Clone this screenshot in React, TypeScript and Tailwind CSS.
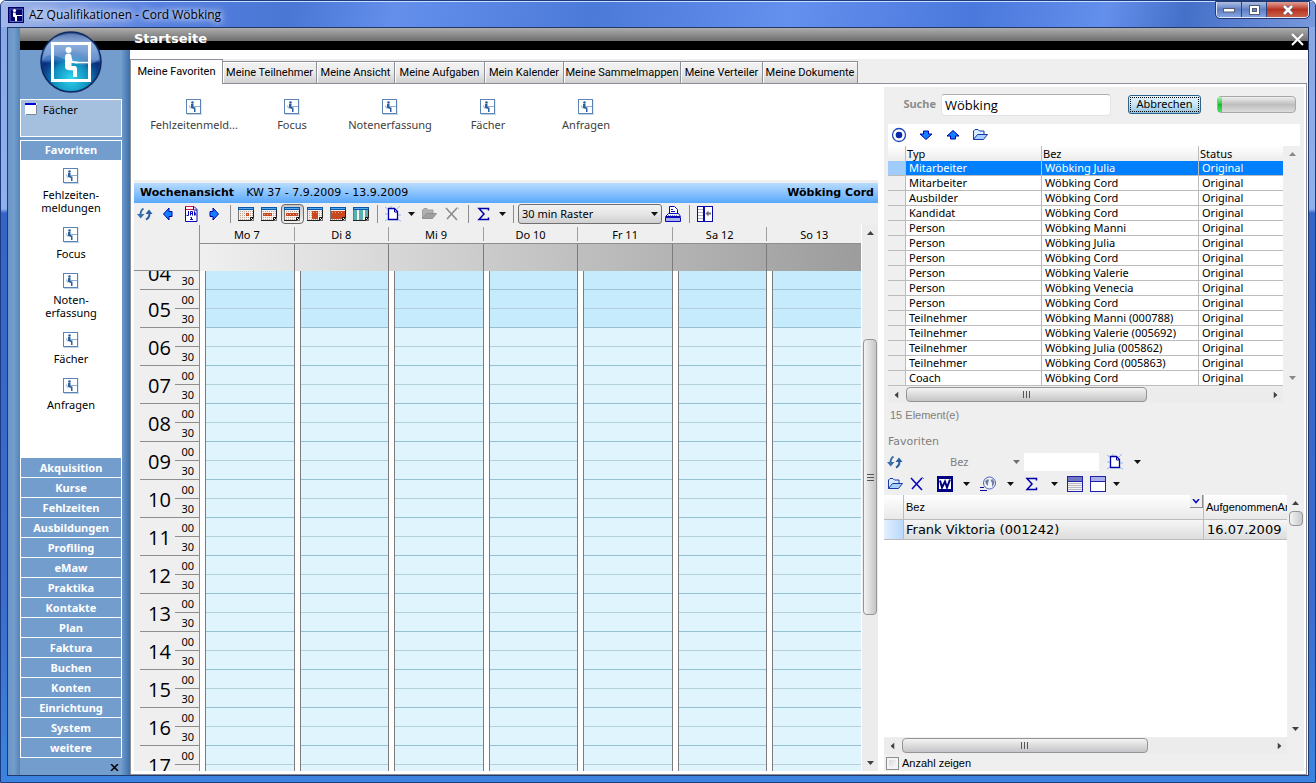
import React from 'react';
import clsx from 'clsx';

const tabs = [
  { label: 'Meine Favoriten', width: 'w-[93px]' },
  { label: 'Meine Teilnehmer', width: 'w-[94px]' },
  { label: 'Meine Ansicht', width: 'w-[78px]' },
  { label: 'Meine Aufgaben', width: 'w-[90px]' },
  { label: 'Mein Kalender', width: 'w-[79px]' },
  { label: 'Meine Sammelmappen', width: 'w-[117px]' },
  { label: 'Meine Verteiler', width: 'w-[82px]' },
  { label: 'Meine Dokumente', width: 'w-[95px]' },
];

const shortcuts = ['Fehlzeitenmeld...', 'Focus', 'Notenerfassung', 'Fächer', 'Anfragen'];

const sideShortcuts = [['Fehlzeiten-', 'meldungen'], ['Focus'], ['Noten-', 'erfassung'], ['Fächer'], ['Anfragen']];

const sections = [
  'Akquisition',
  'Kurse',
  'Fehlzeiten',
  'Ausbildungen',
  'Profiling',
  'eMaw',
  'Praktika',
  'Kontakte',
  'Plan',
  'Faktura',
  'Buchen',
  'Konten',
  'Einrichtung',
  'System',
  'weitere',
];

const days = ['Mo 7', 'Di 8', 'Mi 9', 'Do 10', 'Fr 11', 'Sa 12', 'So 13'];

const hours = ['05', '06', '07', '08', '09', '10', '11', '12', '13', '14', '15', '16'];

const results = [
  ['Mitarbeiter', 'Wöbking Julia'],
  ['Mitarbeiter', 'Wöbking Cord'],
  ['Ausbilder', 'Wöbking Cord'],
  ['Kandidat', 'Wöbking Cord'],
  ['Person', 'Wöbking Manni'],
  ['Person', 'Wöbking Julia'],
  ['Person', 'Wöbking Cord'],
  ['Person', 'Wöbking Valerie'],
  ['Person', 'Wöbking Venecia'],
  ['Person', 'Wöbking Cord'],
  ['Teilnehmer', 'Wöbking Manni (000788)'],
  ['Teilnehmer', 'Wöbking Valerie (005692)'],
  ['Teilnehmer', 'Wöbking Julia (005862)'],
  ['Teilnehmer', 'Wöbking Cord (005863)'],
  ['Coach', 'Wöbking Cord'],
];

/* ---------- icons ---------- */

const Svg = ({ w = 16, h = 16, children }: { w?: number; h?: number; children: React.ReactNode }) => (
  <svg width={w} height={h} viewBox={`0 0 ${w} ${h}`} fill="none" className="shrink-0">
    {children}
  </svg>
);

const FigureIcon = () => (
  <Svg>
    <path d="M1 15.5h15V1" stroke="#c3d3e6" />
    <rect x=".5" y=".5" width="14" height="14" fill="#fff" stroke="#5b84b4" />
    <circle cx="6.500" cy="3.500" r="1.300" fill="#2c5f9c" />
    <path d="M5 5h2.500v2.500l1 1h1V13H8v-3L5 9z" fill="#2c5f9c" />
    <path d="M8 7.500h6" stroke="#8eacd0" />
    <path d="M3.500 6.500l1 3" stroke="#8eacd0" />
  </Svg>
);

const AppIcon = () => (
  <Svg>
    <rect width="16" height="16" fill="#000068" />
    <rect x="2" y="2" width="12.500" height="12.500" stroke="#5b6cc0" />
    <circle cx="6.500" cy="3.500" r="1.600" fill="#fff" />
    <path d="M5 5.500h2.500L8 8h6v1H9v5H7v-3.500l-2-1z" fill="#fff" />
  </Svg>
);

const Logo = () => (
  <svg width="62" height="62" viewBox="0 0 62 62" fill="none">
    <defs>
      <linearGradient id="orb" x1="0" y1="0" x2="0" y2="1">
        <stop offset="0" stopColor="#2c4c90" />
        <stop offset=".2" stopColor="#7fa2d4" />
        <stop offset=".46" stopColor="#4478c0" />
        <stop offset=".52" stopColor="#0b2f80" />
        <stop offset="1" stopColor="#0a6a9c" />
      </linearGradient>
      <radialGradient id="glow" cx=".5" cy=".78" r=".5">
        <stop offset="0" stopColor="#2fd8f0" />
        <stop offset=".6" stopColor="#12a0cc" stopOpacity=".8" />
        <stop offset="1" stopColor="#0b4a98" stopOpacity="0" />
      </radialGradient>
    </defs>
    <circle cx="31" cy="31" r="30" fill="url(#orb)" stroke="#10295e" strokeWidth="1.500" />
    <circle cx="31" cy="31" r="29" fill="url(#glow)" />
    <path d="M3 29C8 20 18 26 31 31s24 2 28-3C58 12 46 3 31 3S4 12 3 29z" fill="#b8d2f2" opacity=".3" />
    <rect x="12.500" y="12.500" width="37" height="37" stroke="#fff" strokeWidth="3" />
    <circle cx="28.500" cy="19" r="3" fill="#fff" />
    <path d="M25 26c0-2.500 1.500-3.500 3.500-3.500S31.500 24 31.500 26l1 4 5 .5v2l-6-.5v3h3c1.500 0 2.500 1 2.500 2.500V46h-4v-6.500l-5-.5c-2-.3-3-1.500-3-3.500z" fill="#fff" />
    <path d="M36 31.500h13" stroke="#fff" strokeWidth="1.500" />
  </svg>
);

const RefreshIcon = () => (
  <Svg>
    <path d="M6.500 2.500C4 4 3.500 6 3.500 9" stroke="#3c6ea8" strokeWidth="2" />
    <path d="M0 8h7.500L3.700 12.500z" fill="#3c6ea8" />
    <path d="M9 13.500c2.500-1 3.500-3 3.500-6.500" stroke="#2a5da0" strokeWidth="2" />
    <path d="M8.500 8h7L12 3.500z" fill="#2a5da0" />
  </Svg>
);

const ArrowIcon = ({ turn }: { turn?: string }) => (
  <svg width="16" height="16" viewBox="0 0 16 16" className={turn}>
    <path d="M3.500 8l5.500-6v3.500h3v5H9V14z" fill="#1080ff" stroke="#0000a8" />
  </svg>
);

const JanIcon = () => (
  <Svg>
    <path d="M2.500.5h8.500l3 3v12H2.500z" fill="#fff" stroke="#0808b8" />
    <path d="M2 .5h9M3 3.500h7" stroke="#d01848" />
    <path d="M10.500.5v3.500H14" stroke="#0808b8" />
    <path d="M5.500 5v4.500h-2M7.500 9.500v-4h2v4M7.500 7.500h2M11.500 9.500v-4l1.500 4" stroke="#0808b8" />
    <path d="M8.500 11v3M7.500 11.500h1M7 13.500h3" stroke="#0808b8" />
  </Svg>
);

type Mark = { x: number; y: number; w: number; h: number };

const CalendarIcon = ({ mark, stripes }: { mark?: Mark; stripes?: boolean }) => (
  <Svg>
    <rect x=".5" y="1.500" width="15" height="13" fill="#f8f0ea" stroke="#777" />
    {stripes ? (
      <path d="M1 4h3v10H1zM6 4h4v10H6zM12 4h3v10h-3z" fill="#58b0b0" />
    ) : (
      <path d="M2 5.500h13M2 7.500h13M2 9.500h13M2 11.500h13M2 13.500h9" stroke="#b8a8a0" strokeDasharray="1 1" />
    )}
    {mark && <rect x={mark.x} y={mark.y} width={mark.w} height={mark.h} fill="#c84820" />}
    {mark && (
      <path
        d={`M${mark.x + 1} ${mark.y + 1.5}h${mark.w - 2}`}
        stroke="#f8d8c8"
        strokeOpacity=".7"
        strokeDasharray="1 2"
      />
    )}
    <path d="M0 1h16v3H0z" fill="#0858a8" />
    <path d="M1 2.500h14" stroke="#58a8f0" />
    <path d="M15.500 4v7M0 14.500h12" stroke="#222" />
    <path d="M12.500 14.500v-3h3z" fill="#fff" stroke="#111" />
  </Svg>
);

const NewIcon = () => (
  <Svg>
    <path d="M0 1l4 3M0 8h3M0 15l4-3M12 13l4 2M12 9h4M12 3l3-3M6 0v2" stroke="#90b8f0" />
    <path d="M3.500 2.500h6l3 3v8h-9z" fill="#fff" stroke="#0000a8" strokeWidth="1.300" />
    <path d="M9.500 2.500v3.500h3" stroke="#0000a8" />
  </Svg>
);

const FolderIcon = ({ disabled }: { disabled?: boolean }) => (
  <Svg>
    <path
      d="M1.500 12.500V4L3 2.500h3L7.500 4H12v3.500"
      fill={disabled ? '#b0b0b0' : '#d8ecff'}
      stroke={disabled ? '#a0a0a0' : '#1838a8'}
    />
    <path
      d="M1.500 12.500l4-5h10l-4 5z"
      fill={disabled ? '#a0a0a0' : '#a8d0ff'}
      stroke={disabled ? '#909090' : '#1838a8'}
    />
  </Svg>
);

const DeleteIcon = ({ color }: { color: string }) => (
  <Svg>
    <path d="M2 2l11 12M13 2L3 13" stroke={color} strokeWidth="1.600" />
    <path d="M13.500 1.500l1 1" stroke={color} />
  </Svg>
);

const SigmaIcon = () => (
  <Svg>
    <path d="M12.500 4.500v-2H3l5 5.500-5 5.500h9.500v-2" stroke="#0000a8" strokeWidth="1.500" />
  </Svg>
);

const PrintIcon = () => (
  <Svg>
    <path d="M4.500 8V.5h5l3 3V8" fill="#fff" stroke="#0808b8" />
    <path d="M6 3.500h2M6 5.500h4" stroke="#0808b8" />
    <path d="M3.500 7.500h10l2 3H.5z" fill="#f0f4ff" stroke="#0808b8" />
    <path d="M3 9.500h10" stroke="#6878c8" strokeDasharray="1 1" />
    <path d="M.5 11.500h15v4H.5z" fill="#a8b4e8" stroke="#0808b8" />
  </Svg>
);

const PanelIcon = () => (
  <Svg>
    <rect x=".5" y=".5" width="15" height="15" fill="#fff" stroke="#0808a8" />
    <path d="M1 3.500h5M1 6.500h5M1 9.500h5M1 12.500h5" stroke="#b0b0c8" />
    <path d="M7 0v16" stroke="#0808a8" strokeWidth="2" />
    <path d="M8.500 7.500l3-3v2H14v2h-2.500v2z" fill="#707070" />
  </Svg>
);

const TargetIcon = () => (
  <Svg>
    <circle cx="8" cy="8" r="6.500" fill="#fff" stroke="#1c48b8" strokeWidth="1.300" />
    <circle cx="8" cy="8" r="3.300" fill="#0828a8" />
  </Svg>
);

const WordIcon = () => (
  <Svg>
    <rect width="16" height="16" fill="#000080" />
    <rect x="2" y="3" width="12" height="10" fill="#fff" />
    <path d="M3 4.500l2 7 3-6 2 6 3-8" stroke="#000080" strokeWidth="2" />
  </Svg>
);

const GlobeIcon = () => (
  <Svg>
    <circle cx="9.500" cy="7" r="6" fill="#f0f4fa" stroke="#5060b8" />
    <path d="M5 5l3-2 1 1-1 3v3l-2-2zM10.500 4l2-1 2 3-1 3-1.500 2v-4z" fill="#7080a0" />
    <path d="M0 11.500h4M0 14.500h7" stroke="#0808a8" />
  </Svg>
);

const ListIcon = () => (
  <Svg>
    <rect x=".5" y=".5" width="15" height="15" fill="#f4f4f4" stroke="#2020a8" />
    <path d="M1 1h14v4H1z" fill="#7078c0" />
    <path d="M0 5.500h16" stroke="#2020a8" />
    <path d="M1 7.500h14M1 9.500h14M1 11.500h14M1 13.500h14" stroke="#b8b8c0" />
  </Svg>
);

const WindowIcon = () => (
  <Svg>
    <rect x=".5" y=".5" width="15" height="15" fill="#fff" stroke="#2020a8" />
    <path d="M1 1h14v4H1z" fill="#a8b0e8" />
    <path d="M0 5.500h16" stroke="#2020a8" />
  </Svg>
);

const Caret = ({ color = '#111' }: { color?: string }) => (
  <Svg w={7} h={4}>
    <path d="M0 0h7L3.500 4z" fill={color} />
  </Svg>
);

/* ---------- small controls ---------- */

const ToolButton = ({ label, active, width = 'w-[23px] pr-px', children }: { label: string; active?: boolean; width?: string; children: React.ReactNode }) => (
  <button
    aria-label={label}
    className={clsx(
      'flex h-5 shrink-0 items-center justify-center rounded-sm',
      width,
      active && 'border border-[#6a6a6a] bg-gradient-to-b from-[#c8c8c8] to-[#f0f0f0]',
    )}
  >
    {children}
  </button>
);

const MenuButton = ({ label, width = 'w-[13px]' }: { label: string; width?: string }) => (
  <ToolButton label={label} width={width}>
    <Caret />
  </ToolButton>
);

const Separator = () => (
  <div className="flex w-[9px] shrink-0 justify-center">
    <div className="h-[18px] w-px bg-[#8c8c8c]" />
  </div>
);

const ScrollArrow = ({ label, turn, color = '#404040' }: { label: string; turn?: string; color?: string }) => (
  <button aria-label={label} className="flex size-4 shrink-0 items-center justify-center">
    <svg width="7" height="4" viewBox="0 0 7 4" className={turn}>
      <path d="M0 4h7L3.500 0z" fill={color} />
    </svg>
  </button>
);

const HorizontalScroll = ({ thumb }: { thumb: string }) => (
  <div className="flex h-4 bg-[#ececec]">
    <ScrollArrow label="Nach links" turn="-rotate-90" />
    <div className="min-w-0 flex-1 px-[2px]">
      <div
        className={clsx(
          'flex h-[15px] items-center justify-center rounded-sm border border-[#959595] bg-gradient-to-b from-[#f4f4f4] via-[#dcdcdc] to-[#c4c5c8]',
          thumb,
        )}
      >
        <div className="flex gap-[2px]">
          <span className="h-[7px] w-px bg-[#555]" />
          <span className="h-[7px] w-px bg-[#555]" />
          <span className="h-[7px] w-px bg-[#555]" />
        </div>
      </div>
    </div>
    <ScrollArrow label="Nach rechts" turn="rotate-90" />
  </div>
);

/* ---------- window parts ---------- */

const TitleBar = () => (
  <div className="flex h-[26px] shrink-0 items-center border-t border-[#c8dcff] bg-[linear-gradient(100deg,#a4b8e8,#5580e0_12%,#4a76d4_22%,#6490ec_30%,#4c7ad8_45%,#6490ee_60%,#4a78dc_74%,#6490ec_84%,#4470c8_90%,#7898dc)] pl-[7px]">
    <AppIcon />
    <div className="ml-[5px] text-xs text-black [text-shadow:0_0_6px_#fff,0_0_10px_#fff] font-['Open_Sans',sans-serif]">
      AZ Qualifikationen - Cord Wöbking
    </div>
    <div className="mr-[6px] ml-auto flex h-4 self-start overflow-hidden rounded-b border border-t-0 border-[#e0e8ff] outline outline-[#24386c]">
      <button aria-label="Minimieren" className="flex w-[25px] items-center justify-center border-r border-[#2c4680] bg-gradient-to-b from-[#aebfe4] via-[#5f7fc4] to-[#86a4e0]">
        <Svg w={12} h={6}>
          <rect x=".5" y="1.500" width="11" height="3.500" fill="#fff" stroke="#555c70" />
        </Svg>
      </button>
      <button aria-label="Maximieren" className="flex w-[25px] items-center justify-center border-r border-[#2c4680] bg-gradient-to-b from-[#aebfe4] via-[#5f7fc4] to-[#86a4e0]">
        <Svg w={11} h={10}>
          <rect x=".5" y=".5" width="10" height="9" fill="#fff" stroke="#555c70" />
          <rect x="3.500" y="3.500" width="4" height="3" fill="#6a86c4" stroke="#555c70" />
        </Svg>
      </button>
      <button aria-label="Schließen" className="flex w-[41px] items-center justify-center bg-gradient-to-b from-[#e0a098] via-[#b83020] to-[#c86048]">
        <Svg w={12} h={10}>
          <path d="M2 1l8 8M10 1L2 9" stroke="#555c70" strokeWidth="4" />
          <path d="M2 1l8 8M10 1L2 9" stroke="#fff" strokeWidth="2.500" />
        </Svg>
      </button>
    </div>
  </div>
);

const HeaderBar = () => (
  <header className="relative flex h-[22px] shrink-0 items-center bg-[linear-gradient(#adadad,#6e6e6e_13px,#000_13px)] pr-1 pl-[114px]">
    <div className="absolute top-[3px] left-5">
      <Logo />
    </div>
    <h1 className="text-[13px] font-bold text-white font-['DejaVu_Sans',sans-serif]">Startseite</h1>
    <button aria-label="Seite schließen" className="ml-auto">
      <Svg w={13} h={13}>
        <path d="M1 1l11 11M12 1L1 12" stroke="#fff" strokeWidth="2" />
      </Svg>
    </button>
  </header>
);

const Sidebar = () => (
  <aside className="flex w-[102px] shrink-0 flex-col bg-[#739dcd] pt-[49px] font-['Noto_Sans',sans-serif] text-[11px]">
    <a href="#faecher" className="flex h-[38px] shrink-0 items-start gap-[6px] border border-white bg-[#a4c0de] px-1 pt-[3px] leading-[14px]">
      <Svg w={12} h={12}>
        <rect width="12" height="12" y="0" fill="#fff" />
        <path d="M0 0h11v2H0z" fill="#0000d8" />
        <path d="M1 11.500h10.500V2" stroke="#788898" />
      </Svg>
      Fächer
    </a>
    <button className="mt-[3px] h-5 shrink-0 border border-b-0 border-white font-bold text-white">Favoriten</button>
    <nav className="flex min-h-0 flex-1 flex-col items-center gap-[13px] overflow-hidden bg-white pt-2 leading-[13px]">
      {sideShortcuts.map((lines) => (
        <a key={lines[0]} href="#favorit" className="flex flex-col items-center gap-[4px]">
          <FigureIcon />
          <span className="text-center">
            {lines.map((line) => (
              <span key={line} className="block">
                {line}
              </span>
            ))}
          </span>
        </a>
      ))}
    </nav>
    <div className="shrink-0 border-x border-white">
      {sections.map((section) => (
        <button key={section} className="block h-5 w-full border-b border-white leading-[19px] font-bold text-white">
          {section}
        </button>
      ))}
    </div>
    <button aria-label="Leiste schließen" className="mt-[6px] mr-[3px] mb-1 self-end">
      <Svg w={9} h={7}>
        <path d="M1 0l7 7M8 0L1 7" stroke="#000" strokeWidth="1.500" />
      </Svg>
    </button>
  </aside>
);

const Tabs = () => (
  <div role="tablist" className="flex h-[25px] shrink-0 items-end bg-[#efefef] font-['Roboto',sans-serif] text-[11px] text-black">
    {tabs.map((tab, i) => (
      <button
        key={tab.label}
        role="tab"
        aria-selected={i === 0}
        className={clsx(
          'shrink-0 border-r border-[#8c8e98] text-center whitespace-nowrap',
          tab.width,
          i === 0
            ? 'h-[25px] border-t border-l bg-white'
            : 'h-[23px] border-y bg-gradient-to-b from-[#f2f2f2] via-[#ebebeb] to-[#cfcfcf] pt-px shadow-[inset_1px_1px_0_#fff]',
        )}
      >
        {tab.label}
      </button>
    ))}
    <div className="flex-1 self-stretch border-b border-[#8c8e98]" />
  </div>
);

const WeekToolbar = () => (
  <div className="flex h-[22px] shrink-0 items-center">
    <ToolButton label="Aktualisieren">
      <RefreshIcon />
    </ToolButton>
    <ToolButton label="Zurück">
      <ArrowIcon />
    </ToolButton>
    <ToolButton label="Heute">
      <JanIcon />
    </ToolButton>
    <ToolButton label="Weiter">
      <ArrowIcon turn="rotate-180" />
    </ToolButton>
    <Separator />
    <ToolButton label="Tag">
      <CalendarIcon mark={{ x: 8, y: 7, w: 3, h: 3 }} />
    </ToolButton>
    <ToolButton label="Arbeitswoche">
      <CalendarIcon mark={{ x: 2, y: 7, w: 9, h: 3 }} />
    </ToolButton>
    <ToolButton label="Woche" active>
      <CalendarIcon mark={{ x: 2, y: 7, w: 12, h: 3 }} />
    </ToolButton>
    <ToolButton label="Zwei Wochen">
      <CalendarIcon mark={{ x: 5, y: 5, w: 6, h: 8 }} />
    </ToolButton>
    <ToolButton label="Monat">
      <CalendarIcon mark={{ x: 1, y: 5, w: 14, h: 8 }} />
    </ToolButton>
    <ToolButton label="Spalten">
      <CalendarIcon stripes />
    </ToolButton>
    <Separator />
    <ToolButton label="Neu">
      <NewIcon />
    </ToolButton>
    <MenuButton label="Neu, Auswahl" />
    <ToolButton label="Öffnen">
      <FolderIcon disabled />
    </ToolButton>
    <ToolButton label="Löschen">
      <DeleteIcon color="#8c8c8c" />
    </ToolButton>
    <Separator />
    <ToolButton label="Summe">
      <SigmaIcon />
    </ToolButton>
    <MenuButton label="Summe, Auswahl" />
    <Separator />
    <div className="relative">
      <select
        aria-label="Raster"
        className="block h-5 w-36 appearance-none rounded-[3px] border border-[#707070] bg-gradient-to-b from-[#f2f2f2] via-[#e6e6e6] to-[#d0d0d0] px-[3px] font-['Noto_Sans',sans-serif] text-[11px] text-black"
      >
        <option>30 min Raster</option>
      </select>
      <div className="pointer-events-none absolute inset-y-0 right-1 flex items-center">
        <Caret />
      </div>
    </div>
    <ToolButton label="Drucken">
      <PrintIcon />
    </ToolButton>
    <Separator />
    <ToolButton label="Seitenleiste">
      <PanelIcon />
    </ToolButton>
  </div>
);

const TimeColumn = () => (
  <div className="w-[66px] shrink-0 border-r border-[#8e8e8e] pl-[6px] text-black">
    <div className="flex h-[19px] items-end justify-between overflow-hidden border-b border-[#8e8e8e]">
      <div className="pl-2 text-xl leading-[30px] font-['Open_Sans',sans-serif]">04</div>
      <div className="w-6 pr-[5px] text-right font-['Noto_Sans',sans-serif] text-[11px] leading-[16px]">30</div>
    </div>
    {hours.map((hour) => (
      <div key={hour} className="flex h-[38px] items-center justify-between border-b border-[#8e8e8e]">
        <div className="pt-[2px] pl-2 text-xl leading-[30px] font-['Open_Sans',sans-serif]">{hour}</div>
        <div className="w-6 text-right font-['Noto_Sans',sans-serif] text-[11px]">
          <div className="h-[19px] border-b border-[#8e8e8e] pr-[5px] leading-[20px]">00</div>
          <div className="h-[18px] pr-[5px] leading-[20px]">30</div>
        </div>
      </div>
    ))}
    <div className="flex items-start justify-between">
      <div className="pt-[5px] pl-2 text-xl leading-[30px] font-['Open_Sans',sans-serif]">17</div>
      <div className="h-[19px] w-6 border-b border-[#8e8e8e] pr-[5px] text-right font-['Noto_Sans',sans-serif] text-[11px] leading-[20px]">
        00
      </div>
    </div>
  </div>
);

const DayColumn = () => (
  <div className="min-w-0 flex-1 border-r border-[#7c7c7c] bg-white pl-[5px] last:border-r-0">
    <div className="border-l border-[#7c7c7c]">
      <div className="h-[19px] border-b border-[#9cc4d4] bg-[#c6ebfc]" />
      {hours.map((hour) => (
        <div key={hour} className={hour === '05' ? 'bg-[#c6ebfc]' : 'bg-[#e0f4fd]'}>
          <div className="h-[19px] border-b border-[#b4d0dc]" />
          <div className="h-[19px] border-b border-[#94c0d2]" />
        </div>
      ))}
      <div className="h-[19px] border-b border-[#b4d0dc] bg-[#e0f4fd]" />
      <div className="h-[19px] bg-[#e0f4fd]" />
    </div>
  </div>
);

const WeekView = () => (
  <section className="flex min-h-0 flex-1 flex-col bg-[#efefef]">
    <div className="mt-[3px] flex h-5 shrink-0 items-center gap-3 bg-gradient-to-b from-[#b8dcff] to-[#58a8fc] pr-1 pl-[6px] font-['DejaVu_Sans',sans-serif] text-[11px] text-black">
      <h2 className="font-bold">Wochenansicht</h2>
      <span>KW 37 - 7.9.2009 - 13.9.2009</span>
      <span className="ml-auto font-bold">Wöbking Cord</span>
    </div>
    <WeekToolbar />
    <div className="flex min-h-0 flex-1">
      <div className="flex min-w-0 flex-1 flex-col">
        <div className="flex h-[46px] shrink-0">
          <div className="w-[66px] shrink-0 border-r border-b border-[#8e8e8e]" />
          <div className="flex flex-1 flex-col">
            <div className="flex h-[19px] border-b border-[#8e8e8e] py-[2px] font-['Noto_Sans',sans-serif] text-[11px] leading-[15px] text-black">
              {days.map((day) => (
                <div key={day} className="flex-1 border-r border-[#a0a0a0] text-center last:border-r-0">
                  {day}
                </div>
              ))}
            </div>
            <div className="flex flex-1 bg-gradient-to-r from-[#f0f0f0] to-[#9c9c9c]">
              {days.map((day) => (
                <div key={day} className="flex-1 border-r border-[#7c7c7c] last:border-r-0" />
              ))}
            </div>
          </div>
        </div>
        <div className="flex min-h-0 flex-1 overflow-hidden">
          <TimeColumn />
          {days.map((day) => (
            <DayColumn key={day} />
          ))}
        </div>
      </div>
      <div className="flex w-[17px] shrink-0 flex-col items-center border-l border-white bg-[#ececec]">
        <ScrollArrow label="Nach oben" />
        <div className="flex w-full flex-1 flex-col px-px">
          <div className="flex-[98]" />
          <div className="flex flex-[275] flex-col items-center justify-center gap-[2px] rounded-sm border border-[#959595] bg-gradient-to-r from-[#f4f4f4] via-[#dcdcdc] to-[#c4c5c8]">
            <span className="h-px w-[7px] bg-[#555]" />
            <span className="h-px w-[7px] bg-[#555]" />
            <span className="h-px w-[7px] bg-[#555]" />
          </div>
          <div className="flex-[140]" />
        </div>
        <ScrollArrow label="Nach unten" turn="rotate-180" />
      </div>
    </div>
  </section>
);

const SearchPanel = () => (
  <section className="pl-1">
    <div className="flex h-[37px] items-center pr-2 pb-[2px]">
      <label htmlFor="suche" className="w-[53px] pr-[5px] text-right text-[11px] font-bold text-[#8c8c8c] font-['Noto_Sans',sans-serif]">
        Suche
      </label>
      <input
        id="suche"
        defaultValue="Wöbking"
        className="h-[22px] w-[170px] rounded-sm border border-[#e0e3e8] border-t-[#abadb3] bg-white px-[3px] text-[13px] text-black font-['Open_Sans',sans-serif]"
      />
      <button className="ml-[17px] h-[19px] w-[73px] rounded-[3px] border border-[#2c628b] bg-gradient-to-b from-[#e4f4fc] via-[#c8e6f6] to-[#94c4de] p-px font-['Noto_Sans',sans-serif] text-[11px] text-black">
        <span className="flex h-full items-center justify-center border border-dotted border-black">Abbrechen</span>
      </button>
      <div
        role="progressbar"
        aria-label="Suchfortschritt"
        aria-valuenow={5}
        className="ml-auto h-[17px] w-[79px] rounded-sm border border-[#a8a8a8] bg-gradient-to-b from-[#f0f0f0] via-[#bebebe] to-[#dcdcdc]"
      >
        <div className="h-full w-1 bg-gradient-to-b from-[#a8f0b0] via-[#10c030] to-[#50d868]" />
      </div>
    </div>
    <div className="mr-1 flex h-[22px] items-center gap-[5px] bg-white">
      <ToolButton label="Auswahl" width="w-[22px]">
        <TargetIcon />
      </ToolButton>
      <ToolButton label="Abwärts" width="w-[22px]">
        <ArrowIcon turn="-rotate-90" />
      </ToolButton>
      <ToolButton label="Aufwärts" width="w-[22px]">
        <ArrowIcon turn="rotate-90" />
      </ToolButton>
      <ToolButton label="Öffnen" width="w-[22px]">
        <FolderIcon />
      </ToolButton>
    </div>
    <div className="mr-1 flex">
      <div className="min-w-0 flex-1">
        <table className="w-full table-fixed border-separate border-spacing-0 bg-white font-['Noto_Sans',sans-serif] text-[11px] leading-[14px] text-black">
          <colgroup>
            <col className="w-[17px]" />
            <col className="w-[136px]" />
            <col className="w-[157px]" />
            <col />
          </colgroup>
          <thead>
            <tr className="h-[15px] bg-gradient-to-b from-white to-[#ececec] text-left">
              <th className="p-0" />
              <th className="border-l border-[#bcbcbc] p-0 pl-px font-normal">Typ</th>
              <th className="border-l border-[#bcbcbc] p-0 pl-px font-normal">Bez</th>
              <th className="border-l border-[#bcbcbc] p-0 pl-px font-normal">Status</th>
            </tr>
          </thead>
          <tbody>
            {results.map(([type, name], i) => (
              <tr key={i} className={clsx('h-[15px]', i === 0 && 'bg-[#0080ff] text-white')}>
                <td className={clsx('border-b border-[#bcbcbc] p-0', i === 0 ? 'bg-[#a0ccfc]' : 'bg-[#efefef]')} />
                <td className="border-b border-l border-[#bcbcbc] p-0 pl-[3px] whitespace-nowrap">{type}</td>
                <td className="border-b border-l border-[#bcbcbc] p-0 pl-[3px] whitespace-nowrap">{name}</td>
                <td className="border-b border-l border-[#bcbcbc] p-0 pl-[3px] whitespace-nowrap">Original</td>
              </tr>
            ))}
          </tbody>
        </table>
        <div className="mt-px">
          <HorizontalScroll thumb="w-[67%]" />
        </div>
      </div>
      <div className="mb-[17px] ml-px flex w-4 flex-col items-center justify-between">
        <ScrollArrow label="Liste nach oben" color="#888" />
        <ScrollArrow label="Liste nach unten" turn="rotate-180" color="#888" />
      </div>
    </div>
    <div className="mt-[5px] pl-[2px] text-[11px] leading-[14px] text-[#808080] font-['Liberation_Sans',sans-serif]">15 Element(e)</div>
  </section>
);

const FavoritesPanel = () => (
  <section className="flex min-h-0 flex-1 flex-col">
    <h2 className="mt-3 pl-1 text-[11px] leading-[15px] text-[#808080] font-['DejaVu_Sans',sans-serif]">Favoriten</h2>
    <div className="mt-[2px] flex h-[22px] shrink-0 items-center">
      <ToolButton label="Aktualisieren" width="w-[22px]">
        <RefreshIcon />
      </ToolButton>
      <div className="relative ml-10">
        <select aria-label="Suchfeld" className="block h-5 w-[78px] appearance-none pl-1 text-[11px] text-[#808080] font-['Noto_Sans',sans-serif]">
          <option>Bez</option>
        </select>
        <div className="pointer-events-none absolute inset-y-0 right-1 flex items-center">
          <Caret color="#707070" />
        </div>
      </div>
      <input aria-label="Suchbegriff" className="h-[18px] w-[75px] bg-white px-1 text-[11px]" />
      <ToolButton label="Neu" width="w-8">
        <NewIcon />
      </ToolButton>
      <MenuButton label="Neu, Auswahl" />
    </div>
    <div className="flex h-[22px] shrink-0 items-center">
      <ToolButton label="Öffnen" width="w-[22px]">
        <FolderIcon />
      </ToolButton>
      <ToolButton label="Löschen" width="w-[22px]">
        <DeleteIcon color="#0808b8" />
      </ToolButton>
      <div className="ml-[6px] flex items-center">
        <ToolButton label="Word" width="w-[22px]">
          <WordIcon />
        </ToolButton>
        <MenuButton label="Word, Auswahl" width="w-5" />
        <ToolButton label="Internet" width="w-6">
          <GlobeIcon />
        </ToolButton>
        <MenuButton label="Internet, Auswahl" width="w-5" />
        <ToolButton label="Summe" width="w-6">
          <SigmaIcon />
        </ToolButton>
        <MenuButton label="Summe, Auswahl" width="w-5" />
        <ToolButton label="Liste" width="w-[22px]">
          <ListIcon />
        </ToolButton>
        <ToolButton label="Fenster" width="w-6">
          <WindowIcon />
        </ToolButton>
        <MenuButton label="Fenster, Auswahl" />
      </div>
    </div>
    <div className="flex min-h-0 flex-1">
      <div className="min-w-0 flex-1 overflow-hidden bg-white">
        <table className="w-full table-fixed border-separate border-spacing-0 text-black">
          <colgroup>
            <col className="w-[19px]" />
            <col />
            <col className="w-[84px]" />
          </colgroup>
          <thead>
            <tr className="h-[25px] bg-gradient-to-b from-white to-[#e8e8e8] text-left text-[11px] font-['Liberation_Sans',sans-serif]">
              <th className="border-b border-[#bcbcbc] p-0" />
              <th className="border-b border-l border-[#bcbcbc] p-0 pl-[2px] font-normal">
                <div className="flex h-6 items-center justify-between">
                  <span>Bez</span>
                  <button aria-label="Sortieren" className="flex h-[13px] w-[13px] items-center justify-center self-start border-r border-b border-[#8c8c8c] bg-[#f0f0f0]">
                    <Svg w={8} h={5}>
                      <path d="M1 0l3 3.500L7 0" stroke="#0808b8" strokeWidth="1.500" />
                    </Svg>
                  </button>
                </div>
              </th>
              <th className="overflow-hidden border-b border-l border-[#bcbcbc] p-0 pl-[2px] font-normal whitespace-nowrap">AufgenommenAm</th>
            </tr>
          </thead>
          <tbody>
            <tr className="h-[20px] bg-gradient-to-b from-[#f6f6f6] to-[#dcdcdc] text-[13px] leading-[18px] font-['DejaVu_Sans',sans-serif]">
              <td className="border-b border-[#bcbcbc] bg-gradient-to-r from-[#e4f0ff] to-[#b8d8fc] p-0" />
              <td className="border-b border-l border-[#bcbcbc] p-0 pl-[2px] whitespace-nowrap">Frank Viktoria (001242)</td>
              <td className="overflow-hidden border-b border-l border-[#bcbcbc] p-0 pl-[3px] whitespace-nowrap">16.07.2009</td>
            </tr>
          </tbody>
        </table>
      </div>
      <div className="flex w-[17px] shrink-0 flex-col items-center">
        <ScrollArrow label="Favoriten nach oben" />
        <div className="h-[15px] w-[14px] rounded-sm border border-[#959595] bg-gradient-to-r from-[#f4f4f4] to-[#c8c9cc]" />
        <div className="flex-1" />
        <ScrollArrow label="Favoriten nach unten" turn="rotate-180" />
      </div>
    </div>
    <div className="mt-px mr-[17px] shrink-0">
      <HorizontalScroll thumb="w-[67%]" />
    </div>
    <label className="flex h-[17px] shrink-0 items-center gap-[3px] pt-[2px] pl-[2px] text-[11px] text-black font-['Liberation_Sans',sans-serif]">
      <input type="checkbox" className="size-[13px] appearance-none border border-[#8c8e90] bg-gradient-to-br from-[#cfd2d6] to-white shadow-[inset_0_0_0_2px_#f4f4f4]" />
      Anzahl zeigen
    </label>
  </section>
);

export default function App() {
  return (
    <div className="flex h-screen min-h-[640px] flex-col overflow-hidden rounded-t-md border border-[#1c3c80] bg-[linear-gradient(#8aa6e4,#90b0ec_208px,#3564c8_212px,#3c6cd0_600px,#3c84e0)]">
      <TitleBar />
      <div className="mx-[6px] mb-[6px] flex min-h-0 flex-1 border border-[#20386c] bg-[#739dcd]">
        <div className="w-3 shrink-0 bg-gradient-to-r from-[#6a94c4] via-[#739dcd] to-[#5484b8]" />
        <div className="flex min-w-0 flex-1 flex-col">
          <HeaderBar />
          <div className="flex min-h-0 flex-1">
            <Sidebar />
            <div className="w-2 shrink-0 bg-gradient-to-r from-[#6c98ca] to-[#3c70ac]" />
            <main className="flex min-w-0 flex-1 flex-col bg-white pt-[9px] pr-px">
              <Tabs />
              <div className="flex min-h-0 flex-1 gap-[6px] border-r border-b border-l border-[#8c8e98] bg-white pr-[2px] pb-[3px] pl-[3px]">
                <div className="flex min-w-0 flex-1 flex-col">
                  <nav className="flex h-24 shrink-0 pt-[15px] pl-[11px]">
                    {shortcuts.map((shortcut) => (
                      <a
                        key={shortcut}
                        href="#favorit"
                        className="flex w-[98px] flex-col items-center gap-[2px] text-[11px] leading-[15px] text-[#404040] font-['Noto_Sans',sans-serif]"
                      >
                        <FigureIcon />
                        {shortcut}
                      </a>
                    ))}
                  </nav>
                  <WeekView />
                </div>
                <div className="flex w-[420px] shrink-0 flex-col pt-[3px]">
                  <div className="flex min-h-0 flex-1 flex-col bg-[#efefef]">
                    <SearchPanel />
                    <FavoritesPanel />
                  </div>
                </div>
              </div>
            </main>
          </div>
        </div>
      </div>
    </div>
  );
}
